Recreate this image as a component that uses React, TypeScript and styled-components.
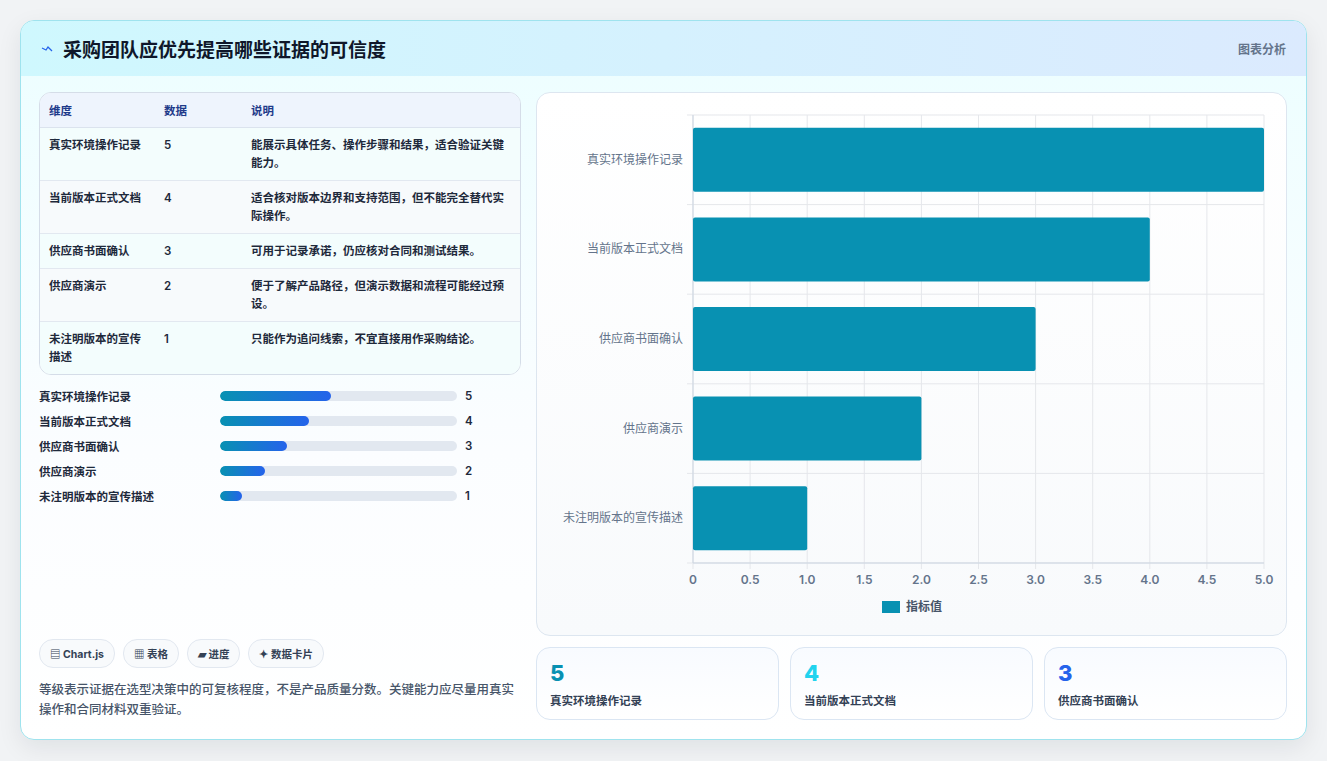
import React from "react";
import styled, { createGlobalStyle } from "styled-components";

const Global = createGlobalStyle`
  html, body { margin: 0; padding: 0; background: #f1f3f5; }
  body { font-family: Inter, "Noto Sans CJK SC", sans-serif; color: #1e293b; }
`;

const rows = [
  { name: "真实环境操作记录", v: 5, d: "能展示具体任务、操作步骤和结果，适合验证关键能力。" },
  { name: "当前版本正式文档", v: 4, d: "适合核对版本边界和支持范围，但不能完全替代实际操作。" },
  { name: "供应商书面确认", v: 3, d: "可用于记录承诺，仍应核对合同和测试结果。" },
  { name: "供应商演示", v: 2, d: "便于了解产品路径，但演示数据和流程可能经过预设。" },
  { name: "未注明版本的宣传描述", v: 1, d: "只能作为追问线索，不宜直接用作采购结论。" },
];

const Page = styled.div`
  padding: 20px 20px 20px 20px;
  height: 761px;
  box-sizing: border-box;
`;
const Card = styled.div`
  width: 1287px;
  height: 720px;
  box-sizing: border-box;
  border: 1px solid #9fe3ee;
  border-radius: 14px;
  overflow: hidden;
  background: linear-gradient(180deg, #ecfeff 0%, #fbfdff 60%, #ffffff 100%);
  box-shadow: 0 8px 24px rgba(15, 23, 42, 0.08);
  display: flex;
  flex-direction: column;
`;
const Header = styled.div`
  height: 55px;
  flex: none;
  display: flex;
  align-items: center;
  justify-content: space-between;
  padding: 0 20px;
  background: linear-gradient(90deg, #cff8fe 0%, #dbeafe 100%);
`;
const Title = styled.h1`
  margin: 0;
  font-size: 19px;
  font-weight: 700;
  color: #0f172a;
  display: flex;
  align-items: center;
  gap: 10px;
`;
const HeadTag = styled.span`
  font-size: 12px;
  font-weight: 600;
  color: #64748b;
`;
const Body = styled.div`
  flex: 1;
  display: grid;
  grid-template-columns: 482px 751px;
  gap: 15px;
  padding: 16px 18px 19px 18px;
  min-height: 0;
`;
const Left = styled.div`
  display: flex;
  flex-direction: column;
  min-height: 0;
`;
const Table = styled.table`
  width: 100%;
  border-collapse: separate;
  border-spacing: 0;
  border: 1px solid #d5dde8;
  border-radius: 12px;
  overflow: hidden;
  font-size: 11.5px;
  background: #fff;
`;
const Th = styled.th`
  text-align: left;
  font-weight: 600;
  color: #1e3a8a;
  background: #eef4fd;
  padding: 9px 9px;
  border-bottom: 1px solid #dbe3ee;
  height: 14px;
`;
const Tr = styled.tr<{ $alt: boolean }>`
  background: ${(p) => (p.$alt ? "#f7fafc" : "#f3fdfd")};
`;
const Td = styled.td<{ $last: boolean }>`
  padding: 8px 9px 8px 9px;
  vertical-align: top;
  line-height: 18px;
  font-weight: 600;
  color: #1e293b;
  border-bottom: ${(p) => (p.$last ? "none" : "1px solid #e2e8f0")};
`;
const Progress = styled.div`
  margin-top: 12px;
  display: flex;
  flex-direction: column;
  gap: 7px;
`;
const PRow = styled.div`
  display: grid;
  grid-template-columns: 173px 237px auto;
  align-items: center;
  column-gap: 8px;
  font-size: 11.5px;
  font-weight: 600;
  height: 18px;
`;
const Track = styled.div`
  height: 10px;
  background: #e2e8f0;
  border-radius: 5px;
  overflow: hidden;
`;
const Fill = styled.div`
  height: 100%;
  border-radius: 5px;
  background: linear-gradient(90deg, #0891b2, #2563eb);
`;
const Spacer = styled.div`flex: 1;`;
const Tags = styled.div`
  display: flex;
  gap: 8px;
`;
const Tag = styled.span`
  font-size: 10.5px;
  font-weight: 700;
  color: #334155;
  border: 1px solid #e2e8f0;
  background: #f8fafc;
  border-radius: 14px;
  padding: 0 10px;
  height: 27px;
  display: inline-flex;
  align-items: center;
  gap: 3px;
`;
const Note = styled.p`
  margin: 12px 0 0;
  font-size: 12.5px;
  line-height: 20px;
  color: #475569;
  font-weight: 500;
`;
const Right = styled.div`
  display: flex;
  flex-direction: column;
  gap: 11px;
  min-height: 0;
`;
const ChartBox = styled.div`
  height: 544px;
  box-sizing: border-box;
  border: 1px solid #dde6f0;
  border-radius: 14px;
  background: linear-gradient(180deg, #ffffff, #f8fafc);
  overflow: hidden;
`;
const Stats = styled.div`
  display: grid;
  grid-template-columns: repeat(3, 1fr);
  gap: 11px;
`;
const Stat = styled.div`
  height: 73px;
  box-sizing: border-box;
  border: 1px solid #dbe6f3;
  border-radius: 14px;
  background: linear-gradient(180deg, #f8fbff, #ffffff);
  padding: 12px 13px;
`;
const StatNum = styled.div<{ $c: string }>`
  font-size: 22px;
  font-weight: 800;
  line-height: 26px;
  color: ${(p) => p.$c};
`;
const StatLabel = styled.div`
  margin-top: 6px;
  font-size: 11.5px;
  font-weight: 600;
  color: #334155;
`;

function Chart() {
  const x0 = 156, x1 = 727, y0 = 22, band = 89.6;
  const ticks = [0, 0.5, 1, 1.5, 2, 2.5, 3, 3.5, 4, 4.5, 5];
  const sx = (v: number) => x0 + ((x1 - x0) * v) / 5;
  const yEnd = y0 + band * 5;
  return (
    <svg width="751" height="544" viewBox="0 0 751 544" style={{ display: "block" }}>
      {ticks.map((t) => (
        <line key={t} x1={sx(t)} x2={sx(t)} y1={y0} y2={yEnd + 6} stroke="#e5e7eb" />
      ))}
      {[0, 1, 2, 3, 4, 5].map((i) => (
        <line key={i} x1={x0 - 6} x2={x1} y1={y0 + band * i} y2={y0 + band * i} stroke="#e5e7eb" />
      ))}
      <line x1={x0} x2={x0} y1={y0} y2={yEnd} stroke="#cbd5e1" />
      <line x1={x0} x2={x1} y1={yEnd} y2={yEnd} stroke="#cbd5e1" />
      {rows.map((r, i) => {
        const cy = y0 + band * i + band / 2;
        return (
          <g key={r.name}>
            <rect x={x0} y={cy - 32} width={sx(r.v) - x0} height={64} fill="#0891b2" rx={2} />
            <text x={x0 - 10} y={cy + 4} textAnchor="end" fontSize="12" fill="#64748b"
              fontFamily='Inter, "Noto Sans CJK SC", sans-serif'>{r.name}</text>
          </g>
        );
      })}
      {ticks.map((t) => (
        <text key={t} x={sx(t)} y={yEnd + 21} textAnchor="middle" fontSize="12" fontWeight="600" fill="#64748b"
          fontFamily="Inter, sans-serif">{t === 0 ? "0" : t.toFixed(1)}</text>
      ))}
      <rect x={345} y={508} width={18} height={12} fill="#0891b2" />
      <text x={369} y={518} fontSize="12" fontWeight="600" fill="#475569"
        fontFamily='Inter, "Noto Sans CJK SC", sans-serif'>指标值</text>
    </svg>
  );
}

export default function App() {
  return (
    <Page>
      <Global />
      <Card>
        <Header>
          <Title>
            <svg width="12" height="10" viewBox="0 0 12 10">
              <path d="M1 4 L5 6 L7 3 L11 7" stroke="#2563eb" strokeWidth="1.3" fill="none" />
            </svg>
            采购团队应优先提高哪些证据的可信度
          </Title>
          <HeadTag>图表分析</HeadTag>
        </Header>
        <Body>
          <Left>
            <Table>
              <thead>
                <tr>
                  <Th style={{ width: 97 }}>维度</Th>
                  <Th style={{ width: 69 }}>数据</Th>
                  <Th>说明</Th>
                </tr>
              </thead>
              <tbody>
                {rows.map((r, i) => (
                  <Tr key={r.name} $alt={i % 2 === 1}>
                    <Td $last={i === 4}>{r.name}</Td>
                    <Td $last={i === 4}>{r.v}</Td>
                    <Td $last={i === 4}>{r.d}</Td>
                  </Tr>
                ))}
              </tbody>
            </Table>
            <Progress>
              {rows.map((r) => (
                <PRow key={r.name}>
                  <span>{r.name}</span>
                  <Track>
                    <Fill style={{ width: `${(r.v / 5) * 47}%` }} />
                  </Track>
                  <span>{r.v}</span>
                </PRow>
              ))}
            </Progress>
            <Spacer />
            <Tags>
              <Tag>▤ Chart.js</Tag>
              <Tag>▦ 表格</Tag>
              <Tag>▰ 进度</Tag>
              <Tag>✦ 数据卡片</Tag>
            </Tags>
            <Note>等级表示证据在选型决策中的可复核程度，不是产品质量分数。关键能力应尽量用真实操作和合同材料双重验证。</Note>
          </Left>
          <Right>
            <ChartBox>
              <Chart />
            </ChartBox>
            <Stats>
              <Stat><StatNum $c="#0891b2">5</StatNum><StatLabel>真实环境操作记录</StatLabel></Stat>
              <Stat><StatNum $c="#22d3ee">4</StatNum><StatLabel>当前版本正式文档</StatLabel></Stat>
              <Stat><StatNum $c="#2563eb">3</StatNum><StatLabel>供应商书面确认</StatLabel></Stat>
            </Stats>
          </Right>
        </Body>
      </Card>
    </Page>
  );
}
